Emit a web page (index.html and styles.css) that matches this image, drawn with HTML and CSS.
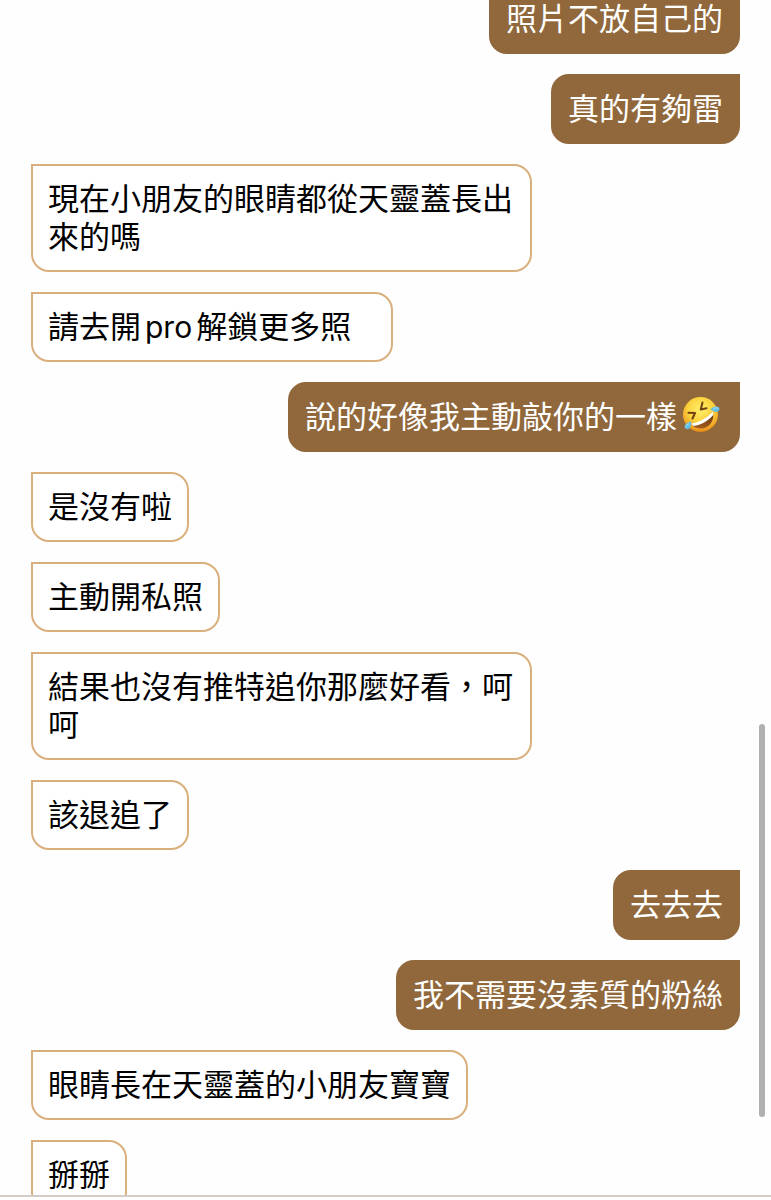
FILE: index.html
```
<!DOCTYPE html>
<html lang="zh-Hant">
<head>
<meta charset="utf-8">
<meta name="viewport" content="width=device-width, initial-scale=1">
<title>聊天</title>
<link rel="stylesheet" href="styles.css">
</head>
<body>
<main class="chat">
  <ul class="messages">
    <li class="bubble sent">照片不放自己的</li>
    <li class="bubble sent">真的有夠雷</li>
    <li class="bubble received">現在小朋友的眼睛都從天靈蓋長出來的嗎</li>
    <li class="bubble received trailing">請去開<span class="latin">pro</span>解鎖更多照</li>
    <li class="bubble sent">說的好像我主動敲你的一樣<svg class="emoji" role="img" aria-label="🤣" viewBox="0 0 38 38">
      <defs>
        <radialGradient id="face" cx="0.5" cy="0.35" r="0.65">
          <stop offset="0" stop-color="#fff06a"/>
          <stop offset="0.55" stop-color="#fbd23e"/>
          <stop offset="0.85" stop-color="#f3aa28"/>
          <stop offset="1" stop-color="#dd8418"/>
        </radialGradient>
        <linearGradient id="mouth" x1="0" y1="0" x2="0" y2="1">
          <stop offset="0" stop-color="#5b2c0c"/>
          <stop offset="1" stop-color="#a65c20"/>
        </linearGradient>
      </defs>
      <circle cx="18.5" cy="18.5" r="17.5" fill="url(#face)"/>
      <path d="M9.500 28.500C16 28 26.500 22 30.500 15.500C33 22.500 29 30.500 22 32.200C17 33.300 11.800 32 9.500 28.500Z" fill="url(#mouth)"/>
      <path d="M9.500 27.500C16 27 26.500 21.500 30.500 15.500C31.300 17 31.300 18.500 30.800 19.500C26 25 19 29 11.500 30C10.500 29.500 10 28.500 9.500 27.500Z" fill="#fff"/>
      <path d="M20.500 6.500L18.700 13.500L24.500 12.200" fill="none" stroke="#70400f" stroke-width="2" stroke-linecap="round" stroke-linejoin="round"/>
      <path d="M6.500 16.800L13 17L10.500 22.500" fill="none" stroke="#70400f" stroke-width="2" stroke-linecap="round" stroke-linejoin="round"/>
      <path d="M28.500 13.500C30.500 10.500 35 9.500 37 11.500C38.500 14 36 16.500 33.500 16C31.500 15.600 30.500 14.200 28.500 13.500Z" fill="#62bfe6"/>
      <path d="M9 25C9.600 28.500 8.800 32.500 6 33.200C3.200 33.600 1.800 31 3.200 28.800C4.600 26.800 7.200 26.800 9 25Z" fill="#62bfe6"/>
      <path d="M32 12.500C33.500 11.500 35 11.500 36 12.300M4.200 30C4.600 28.900 5.500 28.400 6.500 28" fill="none" stroke="#b9e8f8" stroke-width="1" stroke-linecap="round"/>
    </svg></li>
    <li class="bubble received">是沒有啦</li>
    <li class="bubble received">主動開私照</li>
    <li class="bubble received">結果也沒有推特追你那麼好看，呵呵</li>
    <li class="bubble received">該退追了</li>
    <li class="bubble sent">去去去</li>
    <li class="bubble sent">我不需要沒素質的粉絲</li>
    <li class="bubble received">眼睛長在天靈蓋的小朋友寶寶</li>
    <li class="bubble received">掰掰</li>
  </ul>
  <div class="scroll-thumb"></div>
</main>
<footer class="composer-edge"></footer>
</body>
</html>
```
FILE: styles.css
```
* {
  box-sizing: border-box;
}

body {
  display: flex;
  flex-direction: column;
  height: 100vh;
  margin: 0;
  overflow: hidden;
  background: #fefefe;
  color: #000;
  font-family: "Noto Sans CJK TC", sans-serif;
  font-size: 31px;
  line-height: 38px;
}

.chat {
  position: relative;
  flex: 1;
  min-height: 0;
  overflow: hidden;
}

/* The list is scrolled slightly past the start of its first message. */
.messages {
  display: flex;
  flex-direction: column;
  gap: 20px;
  margin: -16px 0 0;
  padding: 0 31px;
  list-style: none;
}

.bubble {
  max-width: 501px;
  padding: 12px 15px 16px;
  border: 2px solid;
}

.sent {
  align-self: flex-end;
  border-color: #90683c;
  border-radius: 18px 0 18px 18px;
  background: #90683c;
  color: #fff;
}

.received {
  align-self: flex-start;
  border-color: #d9b07c;
  border-radius: 0 18px 18px 18px;
  background: #fff;
}

.trailing {
  padding-right: 40px;
}

.latin {
  margin: 0 4px;
  font-family: Inter, sans-serif;
  font-size: 30px;
  line-height: 1;
}

.emoji {
  width: 38px;
  height: 38px;
  margin: 0 3px 0 5px;
  vertical-align: top;
}

.scroll-thumb {
  position: absolute;
  right: 6px;
  bottom: 78px;
  width: 6px;
  height: 393px;
  border-radius: 3px;
  background: #b0b0b0;
}

.composer-edge {
  height: 5px;
  border-top: 2px solid #d3cbc8;
  background: #fefefe;
}
```
